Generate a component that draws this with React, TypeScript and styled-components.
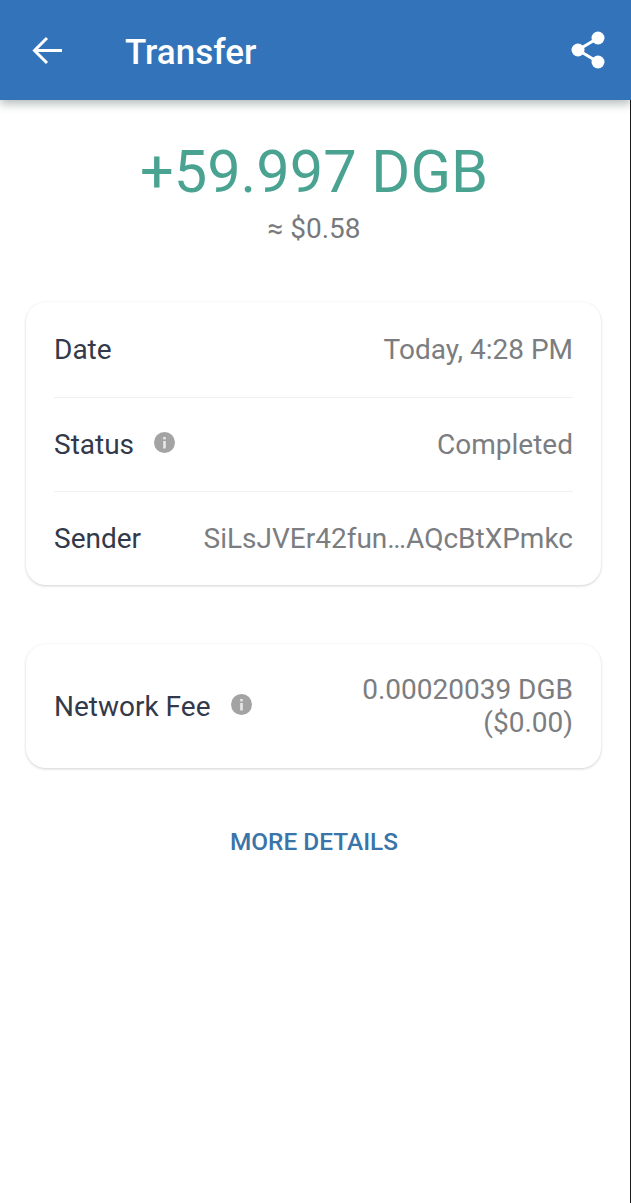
import React from "react";
import styled, { createGlobalStyle } from "styled-components";

const GlobalStyle = createGlobalStyle`
  html, body {
    margin: 0;
    padding: 0;
    background: #fff;
  }
  body {
    font-family: Roboto, "Liberation Sans", sans-serif;
  }
`;

const Page = styled.div`
  width: 631px;
  height: 1203px;
  overflow: hidden;
  background: #fff;
  box-sizing: border-box;
`;

const Header = styled.header`
  height: 100px;
  background: #3273ba;
  box-shadow: 0 4px 9px rgba(60, 80, 80, 0.38);
  display: flex;
  align-items: center;
  padding: 0 26px 0 32px;
  color: #fff;
`;

const Title = styled.h1`
  flex: 1;
  margin: 4px 0 0 63px;
  font-size: 35px;
  font-weight: 500;
`;

const Main = styled.main`
  height: 1103px;
  box-sizing: border-box;
  padding-right: 2px;
  border-right: 1px solid #1a1a1a;
  overflow: hidden;
`;

const Amount = styled.div`
  margin-top: 39px;
  text-align: center;
  font-size: 59.5px;
  line-height: 66px;
  color: #4aa391;
`;

const Fiat = styled.div`
  margin-top: 8px;
  text-align: center;
  font-size: 28px;
  line-height: 32px;
  color: #77797d;
`;

const Card = styled.section<{ $top: number }>`
  margin: ${(p) => p.$top}px 27px 0 26px;
  padding: 0 28px;
  border-radius: 20px;
  background: #fff;
  box-shadow: 0 1px 3px rgba(0, 0, 0, 0.18), 0 0 2px rgba(0, 0, 0, 0.02);
`;

const Row = styled.div<{ $height?: number }>`
  box-sizing: border-box;
  height: ${(p) => p.$height || 94}px;
  display: flex;
  align-items: center;
  justify-content: space-between;
  & + & {
    border-top: 1px solid #f0f0f0;
  }
`;

const Label = styled.div`
  display: flex;
  align-items: center;
  gap: 20px;
  font-size: 28px;
  color: #33394a;
`;

const Value = styled.div`
  font-size: 28px;
  line-height: 33px;
  text-align: right;
  color: #7b7d80;
`;

const DetailsLink = styled.div`
  margin-top: 59px;
  text-align: center;
  font-size: 24.4px;
  font-weight: 500;
  color: #3a74a8;
`;

const Info = styled.svg`
  margin-top: -4px;
`;

const InfoIcon = () => (
  <Info width="21" height="21" viewBox="0 0 21 21">
    <circle cx="10.5" cy="10.5" r="10.5" fill="#a3a3a3" />
    <rect x="9.2" y="9" width="2.6" height="7.5" fill="#e8e8e8" />
    <rect x="9.2" y="5" width="2.6" height="2.4" fill="#e8e8e8" />
  </Info>
);

const BackIcon = () => (
  <svg width="30" height="30" viewBox="0 0 30 30" fill="none" stroke="#fff" strokeWidth="3">
    <path d="M30 15.5H3M15 3L2.5 15.5L15 28" />
  </svg>
);

const ShareIcon = () => (
  <svg width="34" height="38" viewBox="0 0 34 38" fill="#fff" stroke="none">
    <circle cx="27" cy="7" r="6.5" />
    <circle cx="7" cy="19" r="6.5" />
    <circle cx="27" cy="31" r="6.5" />
    <path d="M27 7L7 19L27 31" fill="none" stroke="#fff" strokeWidth="3" />
  </svg>
);

export default function App() {
  return (
    <Page>
      <GlobalStyle />
      <Header>
        <BackIcon />
        <Title>Transfer</Title>
        <ShareIcon />
      </Header>
      <Main>
        <Amount>+59.997 DGB</Amount>
        <Fiat>≈ $0.58</Fiat>
        <Card $top={57}>
          <Row $height={95}>
            <Label>Date</Label>
            <Value>Today, 4:28 PM</Value>
          </Row>
          <Row>
            <Label>
              Status <InfoIcon />
            </Label>
            <Value>Completed</Value>
          </Row>
          <Row>
            <Label>Sender</Label>
            <Value>SiLsJVEr42fun…AQcBtXPmkc</Value>
          </Row>
        </Card>
        <Card $top={59}>
          <Row $height={124}>
            <Label>
              Network Fee <InfoIcon />
            </Label>
            <Value>
              0.00020039 DGB
              <br />
              ($0.00)
            </Value>
          </Row>
        </Card>
        <DetailsLink>MORE DETAILS</DetailsLink>
      </Main>
    </Page>
  );
}
